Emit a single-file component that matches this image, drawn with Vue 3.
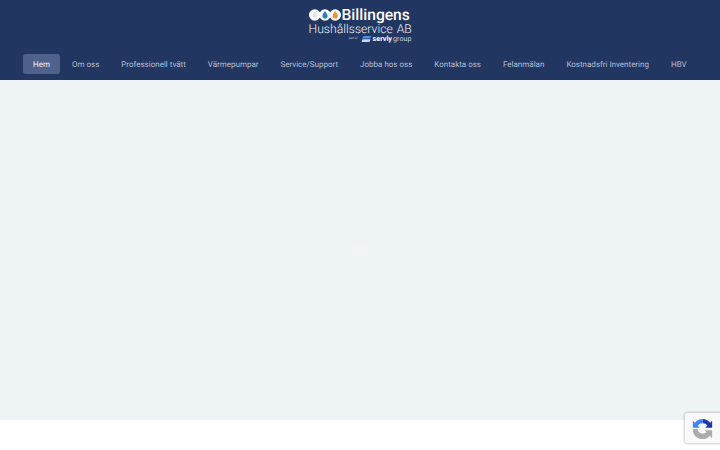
<template>
  <div class="page">
    <header class="site-header">
      <a class="logo" href="#">
        <div class="logo-top">
          <svg class="logo-drops" width="32" height="14" viewBox="0 0 32 14">
            <circle cx="5.800" cy="7" r="5.800" fill="#fff" />
            <circle cx="16" cy="7" r="5.800" fill="#fff" />
            <circle cx="26.200" cy="7" r="5.800" fill="#fff" />
            <path d="M5.800 3.500c1.300 1.800 2.100 2.900 2.100 4.200a2.100 2.100 0 0 1-4.200 0c0-1.300 .8-2.400 2.100-4.200z" fill="#d8e2ee" />
            <path d="M16 3c1.600 2.200 2.600 3.500 2.600 5a2.600 2.600 0 0 1-5.200 0c0-1.500 1-2.800 2.600-5z" fill="#2f7fc1" />
            <path d="M26.200 3c1.600 2.200 2.600 3.500 2.600 5a2.600 2.600 0 0 1-5.200 0c0-1.500 1-2.800 2.600-5z" fill="#e8963a" />
          </svg>
          <span class="logo-name">Billingens</span>
        </div>
        <div class="logo-sub">Hushållsservice <span>AB</span></div>
        <div class="logo-group">
          <span class="logo-part">part of</span>
          <svg width="11" height="6" viewBox="0 0 10 6">
            <path d="M2 0h8L8.500 2.500H0.500z" fill="#4f8be6" />
            <path d="M1 3.300h8L8 6H0z" fill="#c9d7f0" />
          </svg>
          <b>servly</b><span>group</span>
        </div>
      </a>
      <nav class="main-nav">
        <a v-for="item in menu" :key="item" href="#" :class="{ active: item === 'Hem' }">{{ item }}</a>
      </nav>
    </header>

    <main class="hero">
      <div class="loader"></div>
    </main>
    <div class="below"></div>

    <div class="recaptcha">
      <svg width="21" height="21" viewBox="0 0 24 24">
        <path d="M12 1a11 11 0 0 1 8.800 4.400L23 3.200V11h-7.800l2.500-2.500A6.500 6.500 0 0 0 12 6z" fill="#1c3aa9" />
        <path d="M12 1A11 11 0 0 0 3.200 5.400L1 3.200V11h7.800L6.600 8.800A6.500 6.500 0 0 1 12 6z" fill="#4285f4" />
        <path d="M1 12.500h5a6.500 6.500 0 0 0 10.600 3.900L14.500 14H23v9l-2.700-2.700A11 11 0 0 1 1 12.500z" fill="#ababab" />
      </svg>
    </div>
  </div>
</template>

<script setup>
const menu = [
  'Hem',
  'Om oss',
  'Professionell tvätt',
  'Värmepumpar',
  'Service/Support',
  'Jobba hos oss',
  'Kontakta oss',
  'Felanmälan',
  'Kostnadsfri Inventering',
  'HBV'
]
</script>

<style>
html,
body {
  margin: 0;
  overflow: hidden;
}
</style>

<style scoped>
.page {
  position: relative;
  width: 720px;
  height: 450px;
  overflow: hidden;
  background: #fff;
  font-family: Roboto, "Liberation Sans", sans-serif;
  text-rendering: geometricPrecision;
}

.site-header {
  height: 80px;
  background: #223662;
  display: flex;
  flex-direction: column;
  align-items: center;
}

.logo {
  margin-top: 8px;
  width: 103px;
  height: 34px;
  color: #fff;
  text-decoration: none;
}

.logo-top {
  display: flex;
  align-items: center;
  gap: 1px;
  height: 14px;
}

.logo-name {
  font-size: 15.600px;
  font-weight: 500;
  line-height: 14px;
  white-space: nowrap;
}

.logo-sub {
  margin-top: 1px;
  height: 12px;
  font-size: 12.200px;
  font-weight: 300;
  line-height: 12px;
  white-space: nowrap;
  color: #eef1f6;
}

.logo-sub span {
  margin-left: 1px;
}

.logo-group {
  display: flex;
  align-items: center;
  justify-content: flex-end;
  gap: 1px;
  height: 7px;
  font-size: 7.200px;
  line-height: 7px;
  color: #c9d1e0;
}

.logo-group b {
  color: #fff;
}

.logo-part {
  font-size: 3px;
  margin-right: 2px;
}

.main-nav {
  margin-top: 12px;
  width: 674px;
  display: flex;
  gap: 2px;
}

.main-nav a {
  padding: 1px 10px 0;
  height: 19px;
  line-height: 20px;
  border-radius: 3px;
  font-size: 8px;
  color: #b4bfd4;
  text-decoration: none;
  white-space: nowrap;
}

.main-nav a.active {
  background: #4f628c;
  color: #eef1f6;
}

.hero {
  height: 340px;
  background: #eef3f6;
  display: flex;
  align-items: center;
  justify-content: center;
}

.loader {
  width: 16px;
  height: 14px;
  background: #f0f4f7;
}

.below {
  height: 30px;
}

.recaptcha {
  position: absolute;
  left: 685px;
  top: 413px;
  width: 60px;
  height: 30px;
  background: #f9f9f9;
  border-radius: 2px;
  box-shadow: 0 0 3px #9a9a9a;
  display: flex;
  align-items: center;
  padding-left: 7px;
}
</style>
